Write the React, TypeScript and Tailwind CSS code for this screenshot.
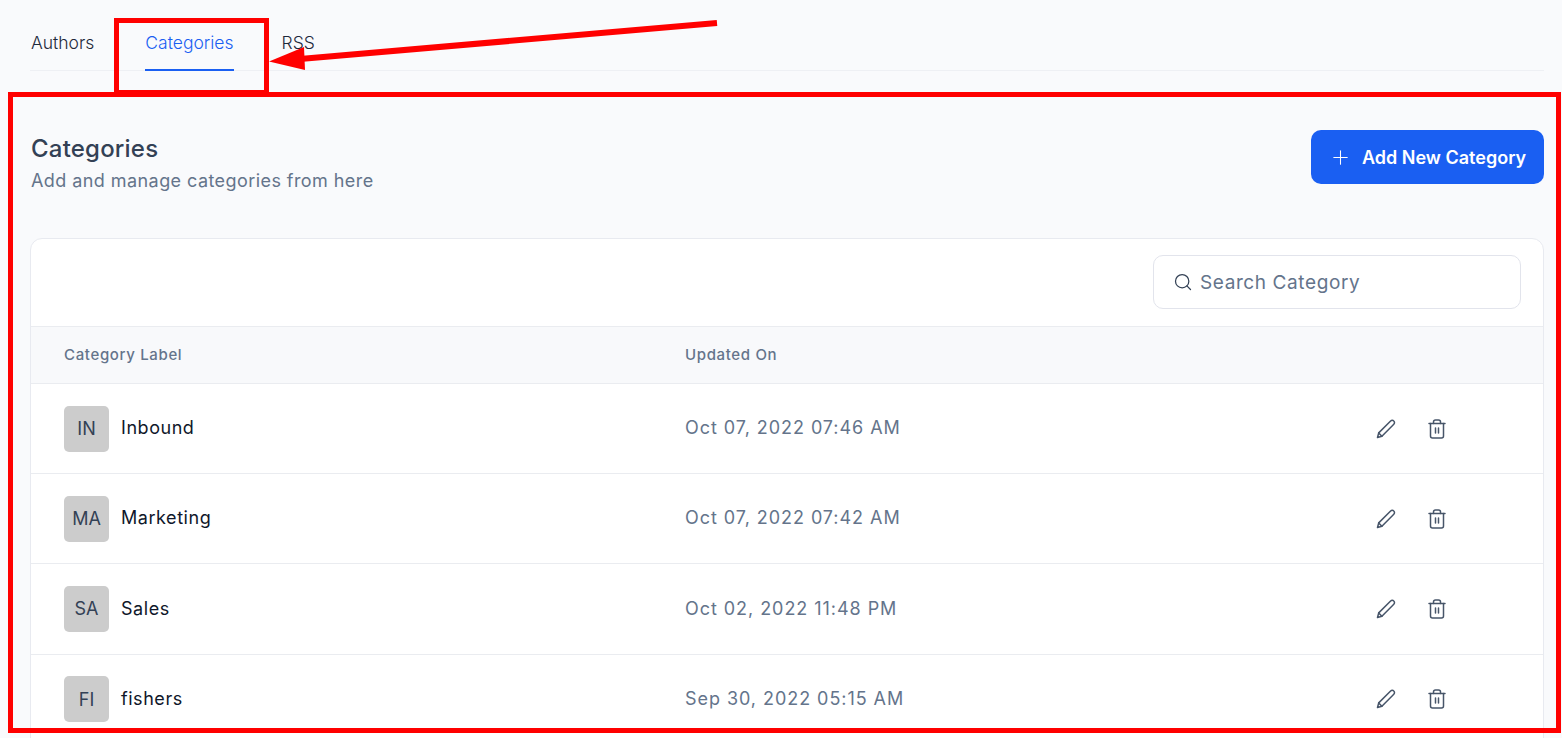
import { Plus, Search } from "lucide-react";

const rows = [
  { initials: "IN", label: "Inbound", updated: "Oct 07, 2022 07:46 AM" },
  { initials: "MA", label: "Marketing", updated: "Oct 07, 2022 07:42 AM" },
  { initials: "SA", label: "Sales", updated: "Oct 02, 2022 11:48 PM" },
  { initials: "FI", label: "fishers", updated: "Sep 30, 2022 05:15 AM" },
];

function PencilIcon() {
  return (
    <svg width="24" height="24" viewBox="0 0 24 24" fill="none" stroke="#475569" strokeWidth="1.5" strokeLinejoin="round" strokeLinecap="round">
      <path d="M3.5 20.5l1.2-4.600L16.600 4a2.200 2.200 0 0 1 3.200 0 2.200 2.200 0 0 1 0 3.200L7.900 19.200z" />
      <path d="M4.700 15.900l3.200 3.300" />
    </svg>
  );
}

function TrashIcon() {
  return (
    <svg width="24" height="24" viewBox="0 0 24 24" fill="none" stroke="#475569" strokeWidth="1.5" strokeLinejoin="round" strokeLinecap="round">
      <path d="M4 6.500h16" />
      <path d="M8.500 6.500V5a2 2 0 0 1 2-2h3a2 2 0 0 1 2 2v1.500" />
      <path d="M5.500 6.500V19a2 2 0 0 0 2 2h9a2 2 0 0 0 2-2V6.500" />
      <path d="M10.500 11v5M13.500 11v5" />
    </svg>
  );
}

function Annotations() {
  return (
    <>
      <div className="absolute left-[114px] top-[18px] w-[155px] h-[77px] border-[5px] border-[#ff0000]" />
      <div className="absolute left-[8px] top-[92px] w-[1553px] h-[641px] border-[5px] border-[#ff0000]" />
      <svg className="absolute left-0 top-0" width="1562" height="100" viewBox="0 0 1562 100">
        <path d="M717 23 L300 59" stroke="#ff0000" strokeWidth="6" fill="none" />
        <polygon points="269,61.500 304,47 305,70" fill="#ff0000" />
      </svg>
    </>
  );
}

export default function App() {
  return (
    <div className="relative h-[738px] overflow-hidden bg-[#f9fafc] pl-[30px] pr-[18px] font-['Inter',sans-serif]">
      <div className="flex h-[71px] items-end gap-[48px] border-b border-[#eef0f4] pl-px text-[17.5px] leading-[24px] text-[#1e293b]">
        <div className="pr-[3px] pb-[15px] font-light">Authors</div>
        <div className="-mb-px flex h-[71px] flex-col justify-end border-b-2 border-[#1a5ff2] pb-[14px] font-light text-[#1a5ff2]">Categories</div>
        <div className="pb-[15px] font-light">RSS</div>
      </div>

      <div className="flex items-start justify-between pt-[59px]">
        <div className="pt-px pl-px">
          <h1 className="text-[24px] leading-[36px] font-[450] tracking-[0.2px] text-[#334155]">Categories</h1>
          <p className="text-[18px] leading-[27px] tracking-[0.43px] text-[#64748b]">Add and manage categories from here</p>
        </div>
        <button className="flex h-[54px] w-[233px] items-center rounded-[10px] bg-[#1a5ff2] pl-[18px] text-[18px] font-semibold text-white">
          <Plus size={23} strokeWidth={1.1} className="mr-[10px]" />
          Add New Category
        </button>
      </div>

      <div className="mt-[44px] rounded-t-[12px] border border-[#e8eaf0] bg-white">
        <div className="flex h-[87px] items-start justify-end pt-[16px] pr-[22px]">
          <div className="flex h-[54px] w-[368px] items-center gap-[7px] rounded-[10px] border border-[#e2e4ec] pl-[19px] text-[19px] tracking-[0.6px] text-[#64748b]">
            <Search size={20} strokeWidth={1.5} className="text-[#334155]" />
            <span className="pt-[2px]">Search Category</span>
          </div>
        </div>
        <div className="flex h-[58px] items-center border-y border-[#eaecf0] bg-[#f8f9fb] pt-px pl-[33px] text-[15px] font-medium tracking-[0.65px] text-[#64748b]">
          <div className="w-[621px]">Category Label</div>
          <div>Updated On</div>
        </div>
        {rows.map((row) => (
          <div key={row.label} className="flex h-[90.2px] items-center border-b border-[#eaecf0] pl-[33px] pr-[94px]">
            <div className="flex w-[621px] items-center gap-[12px]">
              <div className="flex h-[46px] w-[45px] items-center justify-center rounded-[5px] bg-[#cccccc] text-[18px] text-[#334155]">{row.initials}</div>
              <div className="pb-[1.8px] text-[18px] tracking-[0.55px] text-[#0f172a]">{row.label}</div>
            </div>
            <div className="flex-1 pb-[1.8px] text-[18px] tracking-[0.95px] text-[#64748b]">{row.updated}</div>
            <div className="flex items-center gap-[27px]">
              <PencilIcon />
              <TrashIcon />
            </div>
          </div>
        ))}
      </div>

      <Annotations />
    </div>
  );
}
